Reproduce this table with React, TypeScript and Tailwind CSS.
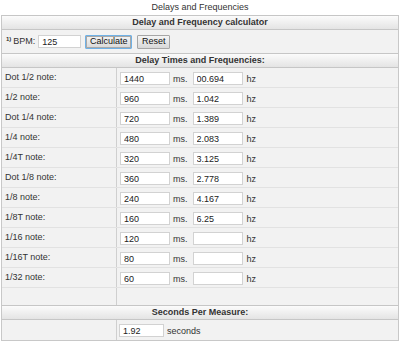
import React from 'react';

const rows = [
  { label: 'Dot 1/2 note:', ms: '1440', hz: '00.694' },
  { label: '1/2 note:', ms: '960', hz: '1.042' },
  { label: 'Dot 1/4 note:', ms: '720', hz: '1.389' },
  { label: '1/4 note:', ms: '480', hz: '2.083' },
  { label: '1/4T note:', ms: '320', hz: '3.125' },
  { label: 'Dot 1/8 note:', ms: '360', hz: '2.778' },
  { label: '1/8 note:', ms: '240', hz: '4.167' },
  { label: '1/8T note:', ms: '160', hz: '6.25' },
  { label: '1/16 note:', ms: '120', hz: '' },
  { label: '1/16T note:', ms: '80', hz: '' },
  { label: '1/32 note:', ms: '60', hz: '' },
];

function Field({ value, className = 'w-[50px]' }: { value: string; className?: string }) {
  return (
    <input
      readOnly
      value={value}
      className={`${className} h-[13px] border border-[#d2d2d2] bg-white px-[3px] text-[9px] leading-none text-[#222] outline-none`}
    />
  );
}

function Header({ children }: { children: React.ReactNode }) {
  return (
    <div className="flex h-[15px] items-center justify-center border-y border-[#c6c6c6] bg-gradient-to-b from-[#fbfbfb] to-[#e4e4e4] text-[9px] font-bold text-[#333]">
      {children}
    </div>
  );
}

export default function App() {
  return (
    <div className="h-[343px] w-[400px] bg-white text-[9px] text-[#333]" style={{ fontFamily: '"Liberation Sans", Arial, sans-serif' }}>
      <div className="flex h-[15px] items-center justify-center pt-[1px] text-[9px] text-[#333]">Delays and Frequencies</div>

      <div className="mx-[1px] border-x border-b border-[#c8c8c8] bg-[#f2f2f2]">
        <Header>Delay and Frequency calculator</Header>

        {/* BPM row */}
        <div className="flex h-[23px] items-center pl-[4px]">
          <sup className="mr-[2px] text-[6px] font-bold">1)</sup>
          <span>BPM:</span>
          <Field value="125" className="ml-[3px] w-[43px]" />
          <button className="ml-[4px] h-[14px] w-[47px] rounded-[1px] border border-[#6fb1e6] bg-gradient-to-b from-[#f5f5f5] to-[#d8d8d8] text-[9px] leading-none text-[#111] shadow-[inset_0_0_0_1px_#a8a8a8]">
            Calculate
          </button>
          <button className="ml-[5px] h-[14px] w-[33px] rounded-[1px] border border-[#a6a6a6] bg-gradient-to-b from-[#f5f5f5] to-[#d8d8d8] text-[9px] leading-none text-[#111]">
            Reset
          </button>
        </div>

        <Header>Delay Times and Frequencies:</Header>

        {rows.map((r) => (
          <div key={r.label} className="flex h-[20px] border-b border-[#e2e2e2]">
            <div className="w-[115px] border-r border-[#cfcfcf] pl-[3px] pt-[3px]">{r.label}</div>
            <div className="flex items-start pl-[3px] pt-[4px]">
              <Field value={r.ms} />
              <span className="ml-[3px] pt-[1px]">ms.</span>
              <Field value={r.hz} className="ml-[5px] w-[50px]" />
              <span className="ml-[4px] pt-[1px]">hz</span>
            </div>
          </div>
        ))}

        <div className="flex h-[17px]">
          <div className="w-[115px] border-r border-[#cfcfcf]" />
        </div>

        <Header>Seconds Per Measure:</Header>

        <div className="flex h-[20px]">
          <div className="w-[115px] border-r border-[#cfcfcf]" />
          <div className="flex items-start pl-[2px] pt-[4px]">
            <Field value="1.92" className="w-[45px]" />
            <span className="ml-[3px] pt-[1px]">seconds</span>
          </div>
        </div>
      </div>
    </div>
  );
}
